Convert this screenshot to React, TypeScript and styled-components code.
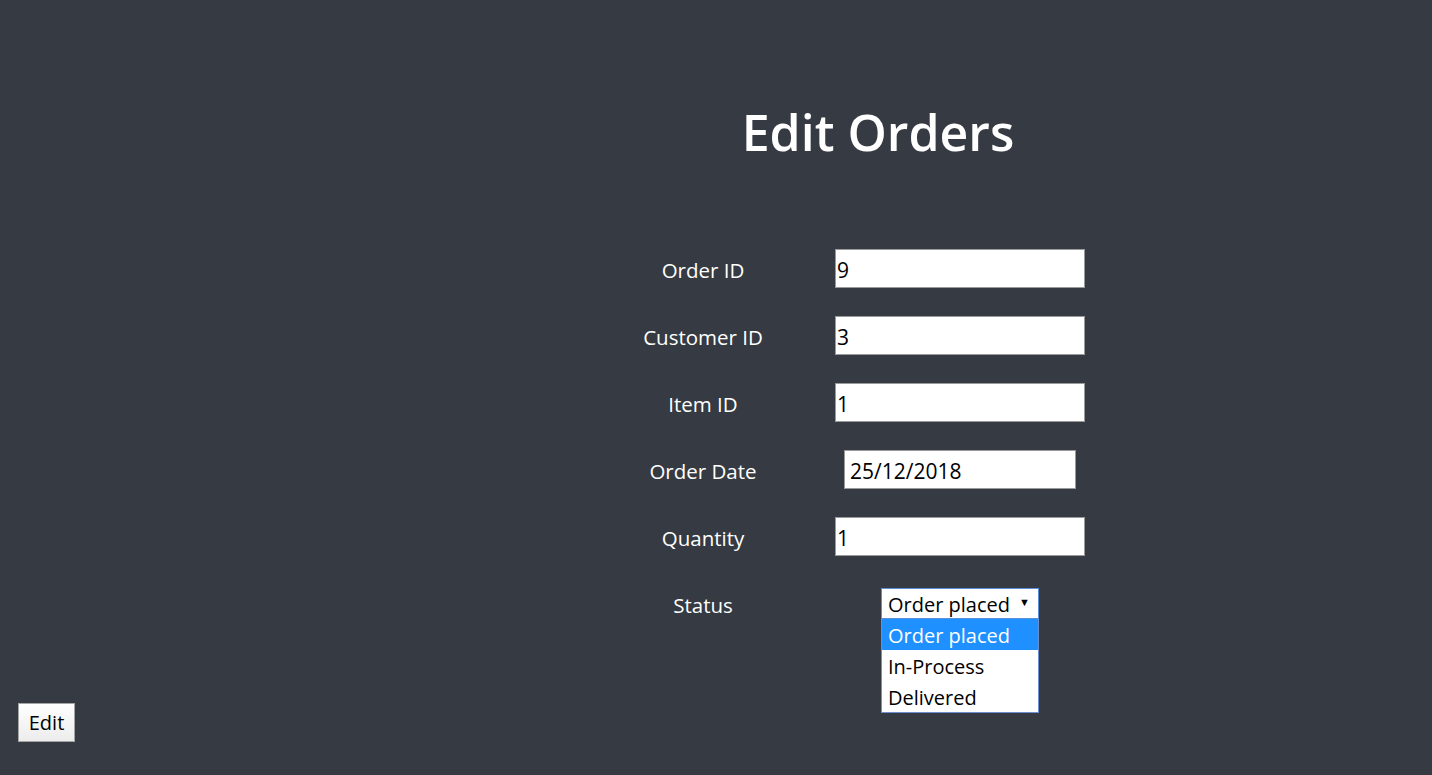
import styled, { createGlobalStyle } from "styled-components";
import { FC } from "react";

const GlobalStyle = createGlobalStyle`
  html, body {
    margin: 0;
    padding: 0;
    background: #363a42;
    font-family: "Open Sans", "Noto Sans", sans-serif;
  }
`;

const fields = [
  { label: "Order ID", value: "9" },
  { label: "Customer ID", value: "3" },
  { label: "Item ID", value: "1" },
  { label: "Order Date", value: "25/12/2018", narrow: true },
  { label: "Quantity", value: "1" },
];

const statuses = ["Order placed", "In-Process", "Delivered"];

const App: FC = () => {
  return (
    <Page>
      <GlobalStyle />
      <Main>
        <Title>Edit Orders</Title>
        <Form onSubmit={(e) => e.preventDefault()}>
          {fields.map((f) => (
            <Row key={f.label}>
              <Label>{f.label}</Label>
              <Cell>
                <Input defaultValue={f.value} $narrow={f.narrow} />
              </Cell>
            </Row>
          ))}
          <Row>
            <Label>Status</Label>
            <Cell>
              <SelectWrap>
                <SelectBox>
                  <span>Order placed</span>
                  <Caret>▼</Caret>
                </SelectBox>
                <Options>
                  {statuses.map((s, i) => (
                    <Option key={s} $active={i === 0}>
                      {s}
                    </Option>
                  ))}
                </Options>
              </SelectWrap>
            </Cell>
          </Row>
        </Form>
      </Main>
      <Footer>
        <EditButton type="button">Edit</EditButton>
      </Footer>
    </Page>
  );
};

export default App;

const Page = styled.div`
  min-height: 775px;
  box-sizing: border-box;
  display: flex;
  flex-direction: column;
`;

const Main = styled.div`
  display: flex;
  flex-direction: column;
  padding-left: 324px;
`;

const Title = styled.h1`
  margin: 97px 0 0;
  height: 70px;
  line-height: 70px;
  text-align: center;
  color: #ffffff;
  font-size: 50px;
  font-weight: 600;
`;

const Form = styled.form`
  margin: 68px 0 0 296px;
  display: grid;
  grid-template-columns: 166px 348px;
  grid-auto-rows: 67px;
`;

const Row = styled.div`
  display: contents;
`;

const Label = styled.label`
  display: flex;
  align-items: center;
  justify-content: center;
  padding-top: 2px;
  color: #ffffff;
  font-size: 20.5px;
`;

const Cell = styled.div`
  display: flex;
  align-items: center;
  justify-content: center;
`;

const Input = styled.input<{ $narrow?: boolean }>`
  box-sizing: border-box;
  width: ${(p) => (p.$narrow ? "232px" : "250px")};
  height: 39px;
  border: 1px solid #9a9a9a;
  background: #ffffff;
  padding: 2px ${(p) => (p.$narrow ? "5px" : "1px")} 0;
  font-family: "Open Sans", "Noto Sans", sans-serif;
  font-size: 21px;
  color: #000000;
  outline: none;
`;

const SelectWrap = styled.div`
  position: relative;
  width: 158px;
`;

const SelectBox = styled.div`
  box-sizing: border-box;
  height: 31px;
  border: 1px solid #5b8fd8;
  background: #ffffff;
  display: flex;
  align-items: center;
  justify-content: space-between;
  padding: 2px 8px 0 6px;
  font-size: 20px;
  color: #000000;
`;

const Caret = styled.span`
  font-size: 11px;
  margin-bottom: 6px;
`;

const Options = styled.ul`
  position: absolute;
  top: 31px;
  left: 0;
  right: 0;
  margin: 0;
  padding: 0;
  list-style: none;
  background: #ffffff;
  border: 1px solid #6d8fcf;
  border-top: none;
`;

const Option = styled.li<{ $active?: boolean }>`
  height: 31px;
  line-height: 33px;
  padding: 0 6px;
  font-size: 20px;
  color: ${(p) => (p.$active ? "#ffffff" : "#000000")};
  background: ${(p) => (p.$active ? "#1e90ff" : "transparent")};
`;

const Footer = styled.div`
  padding: 66px 0 0 18px;
`;

const EditButton = styled.button`
  box-sizing: border-box;
  width: 57px;
  height: 39px;
  border: 1px solid #a5a5a5;
  background: linear-gradient(#ffffff, #ececec);
  font-family: "Open Sans", "Noto Sans", sans-serif;
  font-size: 20px;
  color: #000000;
  padding: 0;
  cursor: pointer;
`;
